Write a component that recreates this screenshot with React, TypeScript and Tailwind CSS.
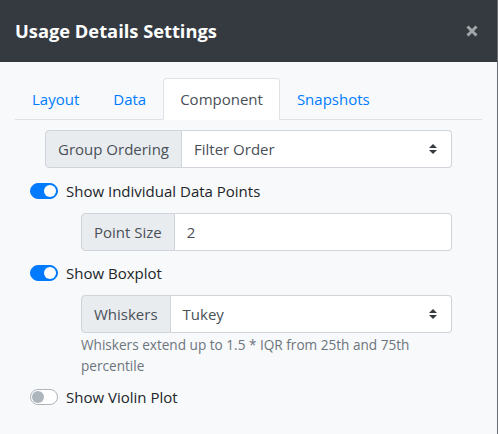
import React from "react";

const font = { fontFamily: '"Open Sans", "Noto Sans", sans-serif' };

function Switch({ on }: { on: boolean }) {
  return on ? (
    <span className="relative inline-block w-[28px] h-[16px] rounded-full bg-[#007bff] border border-[#007bff]">
      <span className="absolute top-[1px] right-[1px] w-[12px] h-[12px] rounded-full bg-white" />
    </span>
  ) : (
    <span className="relative inline-block w-[28px] h-[16px] rounded-full bg-white border border-[#adb5bd]">
      <span className="absolute top-[1px] left-[1px] w-[12px] h-[12px] rounded-full bg-[#adb5bd]" />
    </span>
  );
}

function Arrows() {
  return (
    <svg width="8" height="10" viewBox="0 0 8 10" className="block">
      <path d="M4 0 L8 4 L0 4 Z" fill="#343a40" />
      <path d="M0 6 L8 6 L4 10 Z" fill="#343a40" />
    </svg>
  );
}

function Group({ label, value, select, ml }: { label: string; value: string; select?: boolean; ml: string }) {
  return (
    <div className={`flex h-[38px] ${ml}`}>
      <div className="flex items-center px-[12px] bg-[#e9ecef] border border-[#ced4da] rounded-l-[4px] text-[#495057] text-[15px]">
        {label}
      </div>
      <div className="flex-1 flex items-center justify-between pl-[12px] pr-[14px] bg-white border border-l-0 border-[#ced4da] rounded-r-[4px] text-[#495057] text-[15px]">
        <span>{value}</span>
        {select && <Arrows />}
      </div>
    </div>
  );
}

function Toggle({ on, label }: { on: boolean; label: string }) {
  return (
    <div className="flex items-center h-[24px]">
      <Switch on={on} />
      <span className="ml-[8px] text-[15px] text-[#212529] leading-6">{label}</span>
    </div>
  );
}

export default function App() {
  return (
    <div style={font} className="w-[498px] h-[434px] bg-[#f8f9fa] border-r border-[#6c6f73] flex flex-col overflow-hidden">
      <div className="h-[62px] bg-[#343a40] flex items-center justify-between pl-[15px] pr-[19px] shrink-0">
        <span className="text-white text-[18.3px] font-bold leading-none">Usage Details Settings</span>
        <svg width="12" height="12" viewBox="0 0 12 12">
          <path d="M1.5 1.5 L10.5 10.5 M10.5 1.5 L1.5 10.5" stroke="#a3a6a9" strokeWidth="3" />
        </svg>
      </div>
      <div className="px-[15px] pt-[16px]">
        <div className="flex border-b border-[#dee2e6] text-[15px] leading-6">
          <div className="px-[16px] py-[8px] border border-transparent -mb-px text-[#007bff]">Layout</div>
          <div className="px-[16px] py-[8px] border border-transparent -mb-px text-[#007bff]">Data</div>
          <div className="px-[16px] py-[8px] border border-[#dee2e6] border-b-white bg-white rounded-t-[4px] -mb-px text-[#495057]">Component</div>
          <div className="px-[16px] py-[8px] border border-transparent -mb-px text-[#007bff]">Snapshots</div>
        </div>
        <div className="pl-[15px] pr-[30px] pt-[10px] flex flex-col">
          <Group label="Group Ordering" value="Filter Order" select ml="ml-[15px]" />
          <div className="mt-[11px]"><Toggle on label="Show Individual Data Points" /></div>
          <div className="mt-[10px]"><Group label="Point Size" value="2" ml="ml-[51px]" /></div>
          <div className="mt-[10px]"><Toggle on label="Show Boxplot" /></div>
          <div className="mt-[10px]"><Group label="Whiskers" value="Tukey" select ml="ml-[51px]" /></div>
          <div className="ml-[51px] mt-[1px] text-[13.6px] leading-[21px] text-[#6c757d]">
            Whiskers extend up to 1.5 * IQR from 25th and 75th percentile
          </div>
          <div className="mt-[9px]"><Toggle on={false} label="Show Violin Plot" /></div>
        </div>
      </div>
    </div>
  );
}
